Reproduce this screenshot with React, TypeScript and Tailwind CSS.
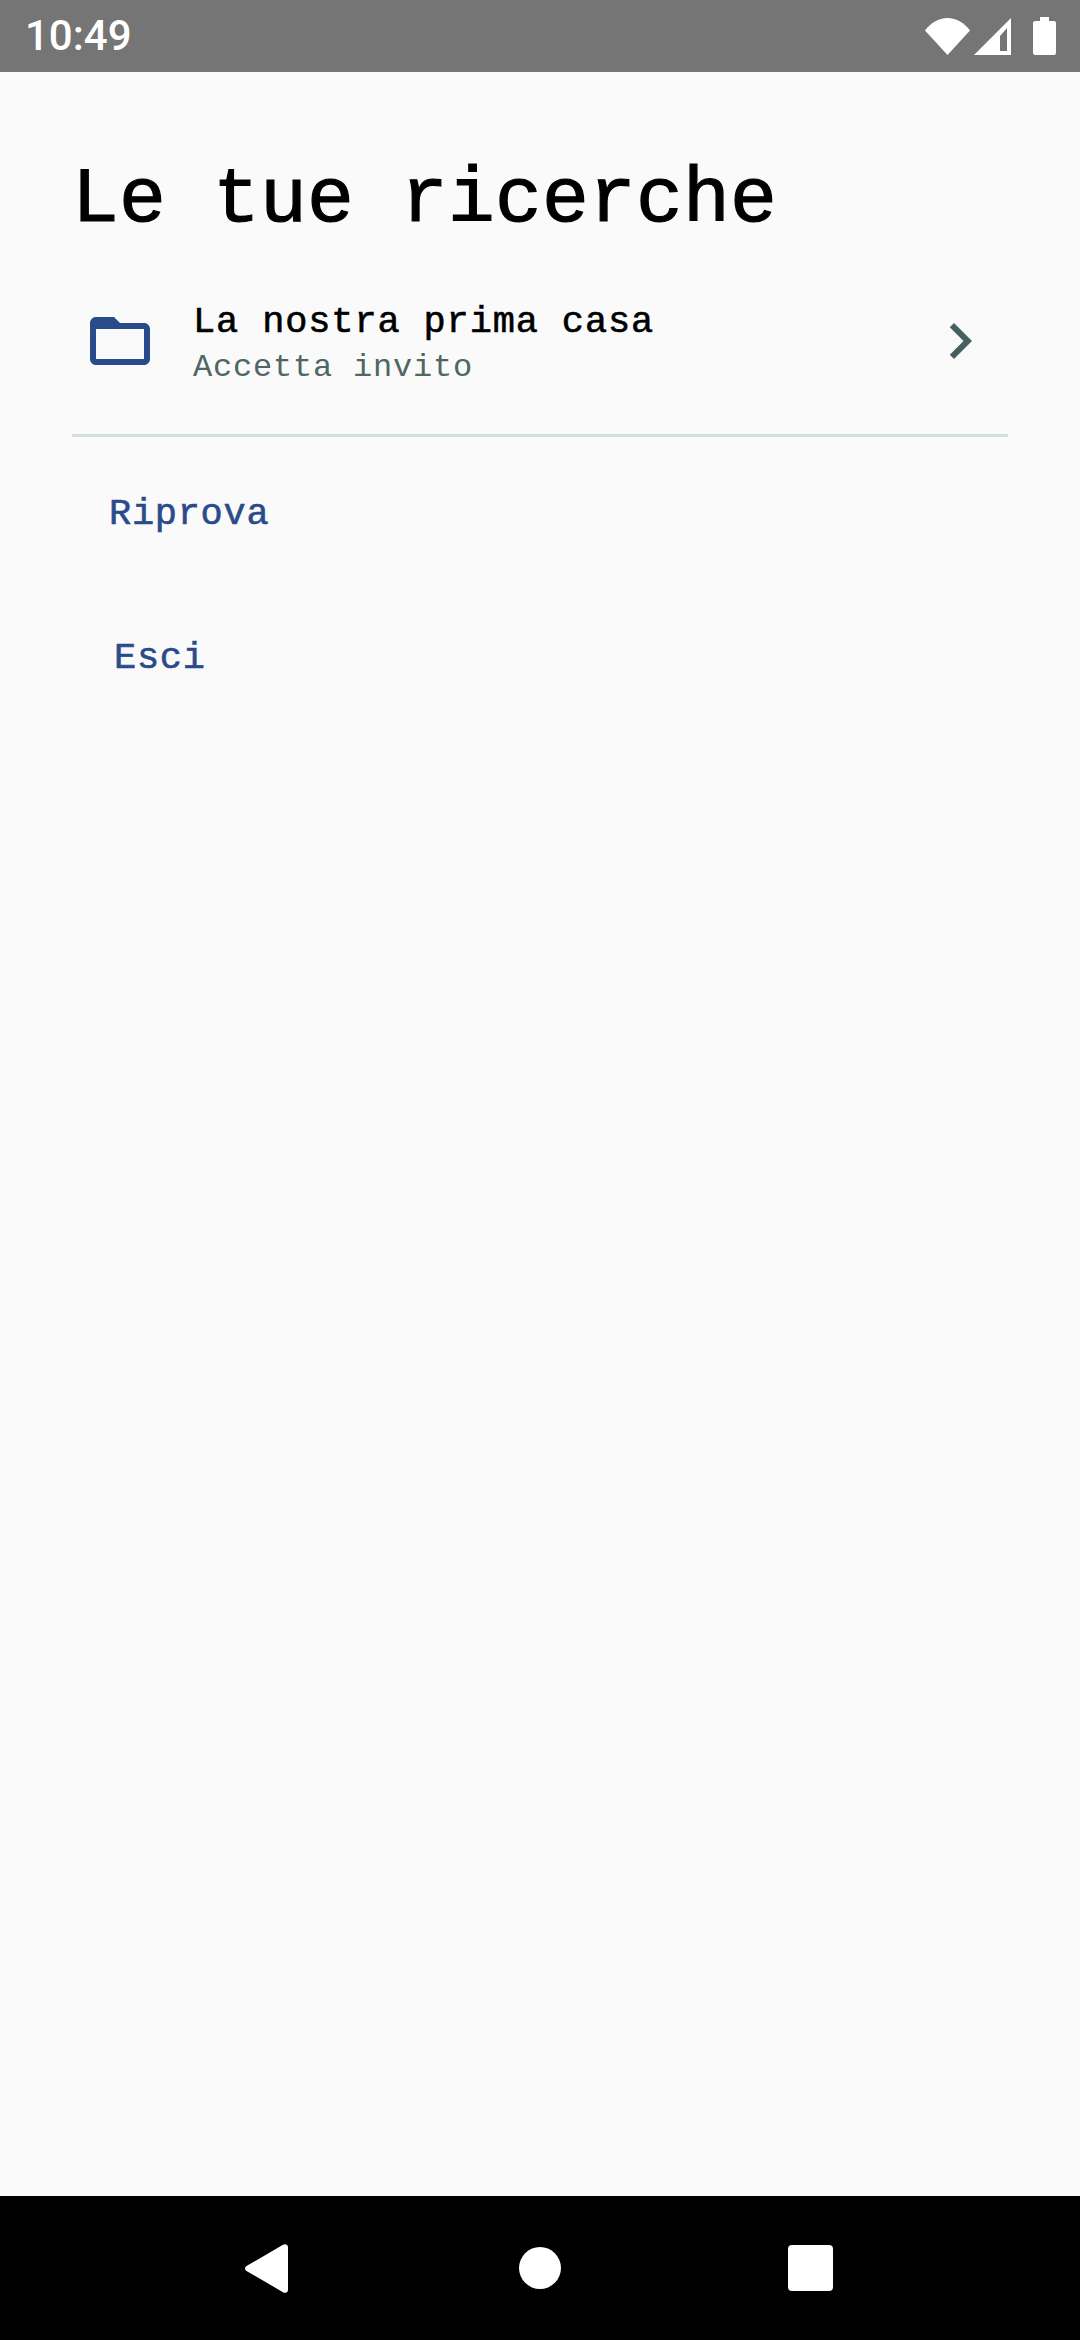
const mono = { fontFamily: '"Liberation Mono", monospace' };

const StatusBar = () => (
  <div className="h-[72px] shrink-0 bg-[#757575] flex items-center justify-between pl-[25px] pr-[24px] text-white">
    <span className="text-[42px] leading-none font-medium" style={{ fontFamily: "Roboto, sans-serif" }}>
      10:49
    </span>
    <div className="flex items-center gap-[4px]">
      {/* wifi */}
      <svg width="45" height="37" viewBox="0 0 45 37" fill="white">
        <path d="M0 12.5C5.5 5 13.5 0 22.5 0S39.500 5 45 12.500L22.500 37z" />
      </svg>
      {/* signal */}
      <svg width="37" height="37" viewBox="0 0 37 37" fill="white">
        <path fillRule="evenodd" d="M37 0v37H0zM33 10l-7 8v15h7z" />
      </svg>
      {/* battery */}
      <svg className="ml-[18px]" width="23" height="38" viewBox="0 0 23 38" fill="white">
        <path d="M7 0h9v4h5a2 2 0 0 1 2 2v30a2 2 0 0 1-2 2H2a2 2 0 0 1-2-2V6a2 2 0 0 1 2-2h5z" />
      </svg>
    </div>
  </div>
);

const NavBar = () => (
  <div className="h-[144px] shrink-0 bg-black flex items-center pl-[245px]">
    <svg width="43" height="49" viewBox="0 0 43 49" fill="white">
      <path d="M38 .8C40 -.6 43 .4 43 3v43c0 2.600-3 3.600-5 2.200L1.500 27c-2-1.300-2-3.700 0-5z" />
    </svg>
    <div className="ml-[231px] w-[42px] h-[42px] rounded-full bg-white" />
    <div className="ml-[227px] w-[45px] h-[46px] rounded-[4px] bg-white" />
  </div>
);

const App = () => {
  return (
    <div className="w-[1080px] h-[2340px] flex flex-col bg-[#fafafa]" style={mono}>
      <StatusBar />
      <main className="flex-1 flex flex-col px-[72px]">
        <h1 className="mt-[68px] text-[78px] leading-[120px] text-black tracking-[0.2px] [-webkit-text-stroke:1.2px_black]">
          Le tue ricerche
        </h1>

        <div className="mt-[45px] h-[129px] flex items-start px-[12px]">
          <svg width="72" height="72" viewBox="0 0 24 24" fill="#2a4b8a">
            <path d="M20 6h-8l-2-2H4c-1.100 0-1.990.9-1.990 2L2 18c0 1.100.9 2 2 2h16c1.100 0 2-.9 2-2V8c0-1.100-.9-2-2-2zm0 12H4V8h16v10z" />
          </svg>
          <div className="ml-[37px] flex-1 -mt-[6px]">
            <div className="text-[37px] leading-[46px] tracking-[0.85px] text-black [-webkit-text-stroke:0.6px_black]">
              La nostra prima casa
            </div>
            <div className="text-[32px] leading-[46px] tracking-[0.8px] text-[#4f6662]">Accetta invito</div>
          </div>
          <svg width="72" height="72" viewBox="0 0 24 24" fill="#456060">
            <path d="M10 6L8.590 7.410 13.170 12l-4.580 4.590L10 18l6-6z" />
          </svg>
        </div>
        <div className="h-[3px] bg-[#d3e0dc]" />

        <div className="mt-[54px] ml-[37px] text-[37px] leading-[46px] tracking-[0.7px] text-[#2a4b8a] [-webkit-text-stroke:0.6px_#2a4b8a]">
          Riprova
        </div>
        <div className="mt-[98px] ml-[42px] text-[37px] leading-[46px] tracking-[0.7px] text-[#2a4b8a] [-webkit-text-stroke:0.6px_#2a4b8a]">
          Esci
        </div>
      </main>
      <NavBar />
    </div>
  );
};

export default App;
